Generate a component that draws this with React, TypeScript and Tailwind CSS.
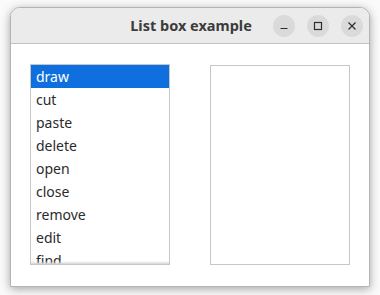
const items = ['draw', 'cut', 'paste', 'delete', 'open', 'close', 'remove', 'edit', 'find']

function CaptionButton({ children }: { children: React.ReactNode }) {
  return (
    <div className="flex h-[22px] w-[22px] items-center justify-center rounded-full bg-[#dadada]">
      {children}
    </div>
  )
}

export default function App() {
  const font = { fontFamily: '"Noto Sans", "Open Sans", sans-serif' }
  return (
    <div className="h-[295px] w-[380px] overflow-hidden bg-[#fafafa] px-[10px] pt-[7px]" style={font}>
      <div className="flex h-[280px] w-[360px] flex-col overflow-hidden rounded-t-[10px] border border-[#b4b4b4] bg-white shadow-[0_2px_10px_rgba(0,0,0,0.35)]">
        {/* Title bar */}
        <div className="relative flex h-[36px] shrink-0 items-center justify-center border-b border-[#c2c2c2] bg-[#ebebeb]">
          <span className="pl-[2px] text-[14.5px] font-bold text-[#3c3c3c]">List box example</span>
          <div className="absolute right-[6px] top-0 flex h-full items-center gap-[12px]">
            <CaptionButton>
              <svg width="10" height="10" viewBox="0 0 10 10">
                <path d="M1.5 7.5h7" stroke="#2e2e2e" strokeWidth="1.2" />
              </svg>
            </CaptionButton>
            <CaptionButton>
              <svg width="10" height="10" viewBox="0 0 10 10">
                <rect x="1.5" y="1.5" width="7" height="7" fill="none" stroke="#2e2e2e" strokeWidth="1.2" />
              </svg>
            </CaptionButton>
            <CaptionButton>
              <svg width="10" height="10" viewBox="0 0 10 10">
                <path d="M1.5 1.5l7 7M8.5 1.5l-7 7" stroke="#2e2e2e" strokeWidth="1.2" />
              </svg>
            </CaptionButton>
          </div>
        </div>

        {/* Body */}
        <div className="flex flex-1 gap-[40px] pl-[19px] pt-[20px]">
          <div className="relative h-[201px] w-[140px] overflow-hidden border border-[#c6c6c6] bg-white">
            {items.map((item, i) => (
              <div
                key={item}
                className={`flex h-[23px] items-center pl-[5px] text-[14px] ${
                  i === 0 ? 'bg-[#0f6fde] text-white' : 'text-[#2b2b2b]'
                }`}
              >
                {item}
              </div>
            ))}
            <div className="absolute inset-x-0 bottom-0 h-[3px] bg-gradient-to-b from-transparent to-[#d6d6d6]" />
          </div>
          <div className="mt-[1px] h-[200px] w-[140px] border border-[#c6c6c6] bg-white" />
        </div>
      </div>
    </div>
  )
}
